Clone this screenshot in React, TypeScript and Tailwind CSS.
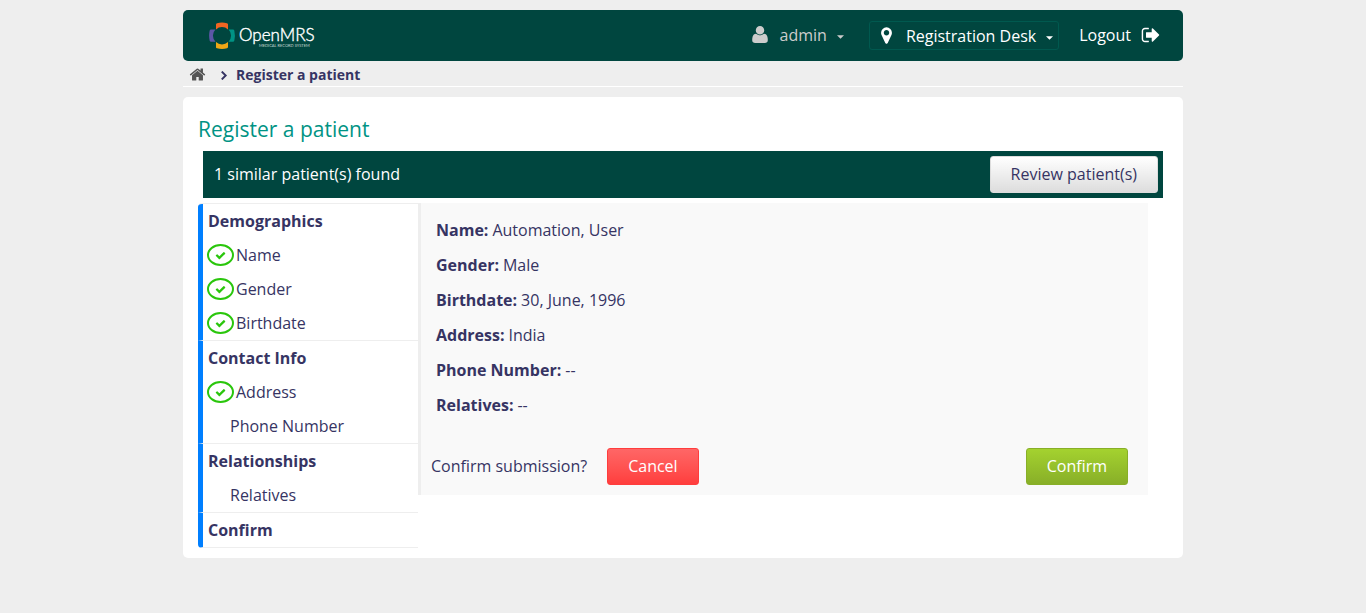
import React from "react";

type IconProps = { d: string; viewBox?: string; className?: string };

function Icon({ d, viewBox = "0 0 1792 1792", className }: IconProps) {
  return (
    <svg viewBox={viewBox} className={className} fill="currentColor" aria-hidden="true">
      <path d={d} />
    </svg>
  );
}

const USER =
  "M1408 1405q0 120-73 189.5t-194 69.5h-874q-121 0-194-69.5t-73-189.5q0-53 3.5-103.5t14-109 26.5-108.5 43-97.5 62-81 85.5-53.5 111.5-20q9 0 42 21.5t74.5 48 108 48 133.5 21.5 133.5-21.5 108-48 74.5-48 42-21.5q61 0 111.5 20t85.5 53.5 62 81 43 97.5 26.5 108.5 14 109 3.500 103.500zm-320-893q0 159-112.500 271.500t-271.500 112.500-271.500-112.500-112.500-271.500 112.500-271.500 271.500-112.500 271.500 112.500 112.500 271.500z";
const HOME =
  "M1472 992v480q0 26-19 45t-45 19h-384v-384h-256v384h-384q-26 0-45-19t-19-45v-480q0-1 .5-3t.5-3l575-474 575 474q1 2 1 6zm223-69l-62 74q-8 9-21 11h-3q-13 0-21-7l-692-577-692 577q-12 8-24 7-13-2-21-11l-62-74q-8-10-7-23.5t11-21.5l719-599q32-26 76-26t76 26l244 204v-195q0-14 9-23t23-9h192q14 0 23 9t9 23v408l219 182q10 8 11 21.5t-7 23.5z";
const MARKER =
  "M1152 640q0-106-75-181t-181-75-181 75-75 181 75 181 181 75 181-75 75-181zm256 0q0 109-33 179l-364 774q-16 33-47.5 52t-67.5 19-67.5-19-46.5-52l-365-774q-33-70-33-179 0-212 150-362t362-150 362 150 150 362z";
const SIGN_OUT =
  "M704 1440q0 4 1 20t.5 26.5-3 23.5-10 19.5-20.5 6.5h-320q-119 0-203.5-84.5t-84.5-203.5v-704q0-119 84.5-203.5t203.5-84.5h320q13 0 22.5 9.5t9.5 22.5q0 4 1 20t.5 26.5-3 23.5-10 19.5-20.5 6.5h-320q-66 0-113 47t-47 113v704q0 66 47 113t113 47h312l11.5 1 11.5 3 8 5.5 7 9 2 13.5zm928-544q0 26-19 45l-544 544q-19 19-45 19t-45-19-19-45v-288h-448q-26 0-45-19t-19-45v-384q0-26 19-45t45-19h448v-288q0-26 19-45t45-19 45 19l544 544q19 19 19 45z";
const CHECK =
  "M1671 566q0 40-28 68l-724 724-136 136q-28 28-68 28t-68-28l-136-136-362-362q-28-28-28-68t28-68l136-136q28-28 68-28t68 28l294 295 656-657q28-28 68-28t68 28l136 136q28 28 28 68z";

function Logo() {
  return (
    <svg width="112" height="28" viewBox="0 0 112 28" role="img" aria-label="OpenMRS">
      <path d="M7 2.500Q7 1.500 8 1.200Q13 0 18 1.200Q19 1.500 19 2.500V7.500A8.500 8.500 0 0 0 7 7.500Z" fill="#f26522" />
      <path d="M7 25.500Q7 26 8 26.300Q13 27.500 18 26.300Q19 26 19 25V20A8.500 8.500 0 0 1 7 20Z" fill="#eea616" />
      <path d="M2 7.500Q1 7.500 .7 8.500Q-.5 13.500 .7 18.700Q1 19.700 2 19.700H6.500A8.500 8.500 0 0 1 6.500 7.500Z" fill="#5b57a6" />
      <path d="M24 7.500Q25 7.500 25.300 8.500Q26.500 13.500 25.300 18.700Q25 19.700 24 19.700H19.500A8.500 8.500 0 0 0 19.500 7.500Z" fill="#009384" />
      <text x="30" y="19" fontFamily="Lato, sans-serif" fontSize="17" fontWeight="300" fill="#fff" stroke="#fff" strokeWidth="0.4">
        OpenMRS
      </text>
      <text x="50" y="25" fontFamily="Lato, sans-serif" fontSize="4" fill="#c9d8d5">
        MEDICAL RECORD SYSTEM
      </text>
    </svg>
  );
}

function Caret() {
  return (
    <svg viewBox="0 0 8 4" className="h-1 w-[7px]" fill="currentColor" aria-hidden="true">
      <path d="M0 0h8L4 4z" />
    </svg>
  );
}

const sections = [
  {
    title: "Demographics",
    items: [
      { label: "Name", done: true },
      { label: "Gender", done: true },
      { label: "Birthdate", done: true },
    ],
  },
  {
    title: "Contact Info",
    items: [
      { label: "Address", done: true },
      { label: "Phone Number", done: false },
    ],
  },
  { title: "Relationships", items: [{ label: "Relatives", done: false }] },
  { title: "Confirm", items: [] },
];

const summary = [
  ["Name", "Automation, User"],
  ["Gender", "Male"],
  ["Birthdate", "30, June, 1996"],
  ["Address", "India"],
  ["Phone Number", "--"],
  ["Relatives", "--"],
];

export default function App() {
  return (
    <div className="min-h-screen bg-[#eeeeee] pt-2.5 font-['Open_Sans',sans-serif] text-base font-normal text-[#363463]">
      <div className="mx-auto max-w-[1000px]">
        <header className="flex h-[51px] items-center justify-between rounded-[5px] bg-[#00463f] pr-[22px] pl-[26px] text-white">
          <a href="#home">
            <Logo />
          </a>
          <div className="flex items-center">
            <button className="flex items-center pb-0.5 text-[#cccccc]">
              <Icon d={USER} viewBox="0 128 1408 1536" className="mr-3 h-[17px] w-4" />
              admin
              <span className="ml-2.5 pt-1">
                <Caret />
              </span>
            </button>
            <button className="ml-[25px] flex h-[29px] items-center rounded-[3px] border border-[#00594f] pr-[5px] pl-[7px]">
              <Icon d={MARKER} className="mr-2.5 size-[19px]" />
              Registration Desk
              <span className="ml-2.5 pt-1">
                <Caret />
              </span>
            </button>
            <a href="#logout" className="ml-5 flex items-center pb-0.5">
              Logout
              <Icon d={SIGN_OUT} className="ml-2.5 size-5" />
            </a>
          </div>
        </header>

        <nav aria-label="Breadcrumb" className="flex h-[26px] items-center border-b border-white pt-0.5 pl-1.5 text-sm font-bold">
          <a href="#home" aria-label="Home" className="text-[#555555]">
            <Icon d={HOME} className="size-[17px]" />
          </a>
          <svg viewBox="0 0 6 8" className="mt-0.5 mr-2 ml-3.5 h-[9px] w-2" fill="none" stroke="currentColor" strokeWidth="1.7" aria-hidden="true">
            <path d="M1 0.500L4.500 4L1 7.500" />
          </svg>
          <span>Register a patient</span>
        </nav>

        <main className="mt-2.5 rounded-[5px] bg-white px-[15px] pt-[17px] pb-2.5">
          <h1 className="text-[21px] leading-[30px] text-[#009384]">Register a patient</h1>
          <div className="mx-[5px] mt-[7px] flex h-[47px] items-center justify-between bg-[#00463f] pr-[5px] pl-[11px] text-white">
            <span className="pb-0.5">1 similar patient(s) found</span>
            <button className="h-[37px] rounded-[3px] border border-[#dddddd] bg-linear-to-b from-white to-[#dddddd] px-5 pb-0.5 text-[#363463]">
              Review patient(s)
            </button>
          </div>

          <div className="mt-[5px] flex items-start pr-5">
            <ul className="w-[220px] shrink-0 overflow-hidden rounded-l-[4px] border-t border-[#eeeeee]">
              {sections.map((section) => (
                <li key={section.title} className="border-b border-l-5 border-b-[#eeeeee] border-l-[#007fff] leading-[34px]">
                  <span className="block pl-[5px] font-bold">{section.title}</span>
                  <ul>
                    {section.items.map((item) => (
                      <li key={item.label} className={item.done ? "flex items-center pl-1" : "pl-[27px]"}>
                        {item.done && (
                          <span className="mr-0.5 flex h-[22px] w-[27px] items-center justify-center rounded-[50%] border-2 border-[#2ac60c] text-[#2ac60c]">
                            <Icon d={CHECK} className="size-[11px]" />
                          </span>
                        )}
                        {item.label}
                      </li>
                    ))}
                  </ul>
                </li>
              ))}
            </ul>

            <section className="grow border-l-3 border-[#eeeeee] bg-[#f9f9f9] px-2.5 py-2.5">
              <dl className="flex flex-col pl-[5px] leading-[35px]">
                {summary.map(([label, value]) => (
                  <div key={label} className="flex gap-1">
                    <dt className="font-bold">{label}:</dt>
                    <dd>{value}</dd>
                  </div>
                ))}
              </dl>
              <div className="mt-[25px] flex items-center pr-2.5">
                <span className="pb-0.5">Confirm submission?</span>
                <button className="ml-5 h-[37px] rounded-[3px] border border-[#ff3d3d] bg-linear-to-b from-[#ff6666] to-[#ff3d3d] px-5 pb-0.5 text-white">
                  Cancel
                </button>
                <button className="ml-auto h-[37px] rounded-[3px] border border-[#88af28] bg-linear-to-b from-[#a4d22f] to-[#88af28] px-5 pb-0.5 text-white">
                  Confirm
                </button>
              </div>
            </section>
          </div>
        </main>
      </div>
    </div>
  );
}
